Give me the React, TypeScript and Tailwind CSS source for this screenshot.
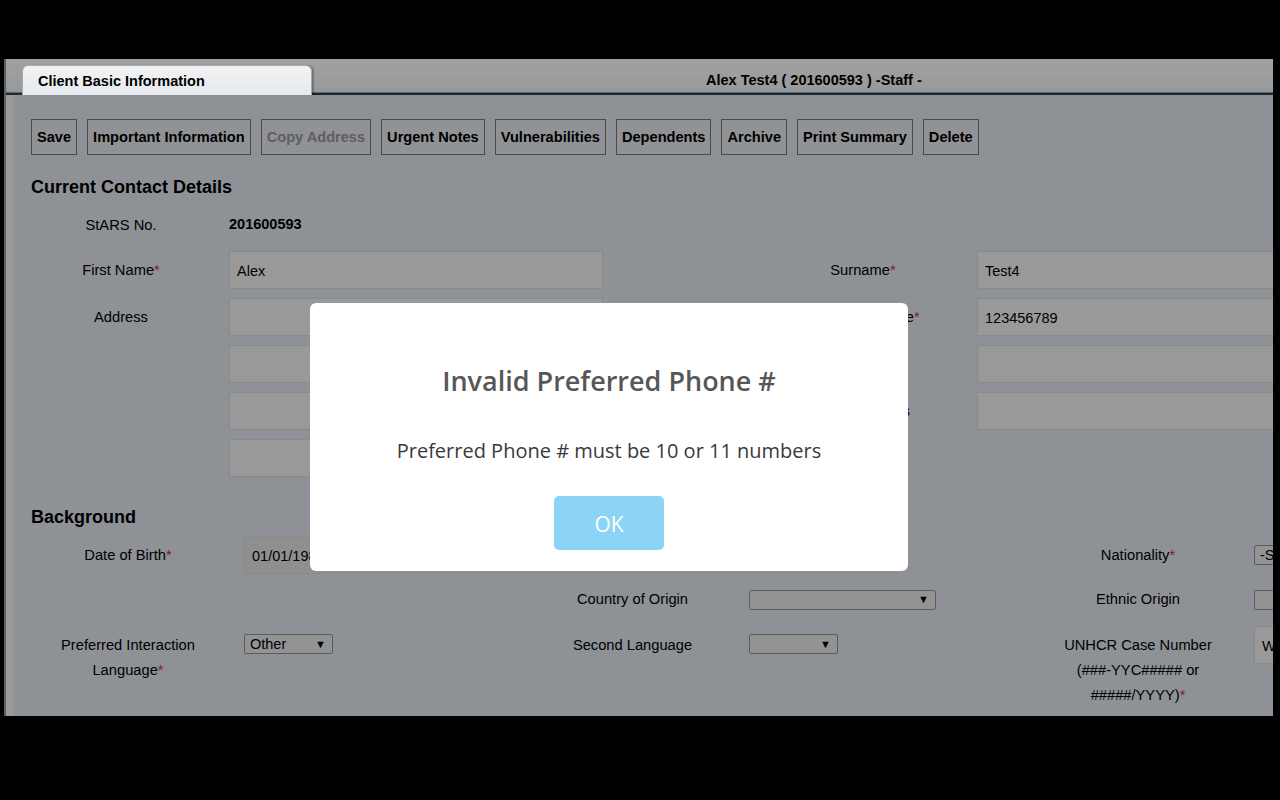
import React from 'react'

const Req = () => <span className="text-[#dc2929]">*</span>

const Field = ({ className = '', value = '' }: { className?: string; value?: string }) => (
	<div className={`h-[38px] shrink-0 border border-[#dbdbdb] bg-[#f3f3f3] pl-[7px] pt-[3px] flex items-center text-[14.5px] text-black whitespace-nowrap overflow-hidden ${className}`}>
		{value}
	</div>
)

const Select = ({ className = '', value = '' }: { className?: string; value?: string }) => (
	<div className={`h-[20px] shrink-0 rounded-[2px] border border-[#929292] bg-[#e9e9e9] pl-[5px] pr-[6px] flex items-center justify-between text-[14.5px] text-black whitespace-nowrap overflow-hidden ${className}`}>
		<span>{value}</span>
		<span className="text-[11px] leading-none">▼</span>
	</div>
)

const buttons = [
	'Save',
	'Important Information',
	'Copy Address',
	'Urgent Notes',
	'Vulnerabilities',
	'Dependents',
	'Archive',
	'Print Summary',
	'Delete',
]

export default function App() {
	return (
		<div className="relative h-[800px] w-[1280px] overflow-hidden bg-black font-['Liberation_Sans',Arial,sans-serif] text-black">
			<div className="pt-[59px] pl-[4px]">
				<div className="h-[657px] w-[1269px] overflow-hidden border-l-2 border-[#8f969c] bg-[#e1e6ee] flex flex-col">
					{/* header bar with tab */}
					<div className="relative flex h-[36px] shrink-0 items-end border-b-2 border-[#2c3e51] bg-gradient-to-b from-[#fefefe] via-[#f8f9fa] to-[#edf1f6] shadow-[inset_0_-1px_0_#8fa3b6]">
						<div className="relative z-10 ml-[16px] -mb-[2px] flex h-[30px] w-[290px] shrink-0 items-center rounded-t-[6px] border border-b-0 border-[#a8a8a8] bg-gradient-to-b from-[#f2f3f4] to-[#e6e9ee] pl-[15px] pt-[2px] text-[14.5px] font-bold shadow-[2px_0_1px_rgba(0,0,0,0.25)]">
							Client Basic Information
						</div>
						<div className="ml-[394px] mb-[4px] whitespace-nowrap text-[14.5px] font-bold leading-[17px]">
							Alex Test4 ( 201600593 ) -Staff -
						</div>
					</div>

					{/* body */}
					<div className="flex-1 border-l-[8px] border-[#f3f3f3] pl-[17px] pt-[24px]">
						<div className="flex gap-[10px]">
							{buttons.map((b) => (
								<div
									key={b}
									className={`flex h-[36px] shrink-0 items-center border border-[#757575] bg-[#e4e7ec] px-[5px] pt-[1px] text-[14.6px] font-bold whitespace-nowrap ${b === 'Copy Address' ? 'text-[#959595]' : 'text-black'}`}
								>
									{b}
								</div>
							))}
						</div>

						<div className="mt-[21px] text-[18px] font-bold leading-[22px]">Current Contact Details</div>

						<div className="mt-[6px] flex flex-col gap-[9px] text-[14.7px]">
							<div className="flex h-[38px] items-center pt-[4px]">
								<div className="w-[198px] shrink-0 pr-[18px] text-center">StARS No.</div>
								<div className="text-[14.5px] font-bold">201600593</div>
							</div>
							<div className="flex h-[38px] items-center">
								<div className="w-[198px] shrink-0 pr-[18px] text-center">First Name<Req /></div>
								<Field className="w-[374px]" value="Alex" />
								<div className="w-[146px] shrink-0" />
								<div className="w-[228px] shrink-0 text-center">Surname<Req /></div>
								<Field className="w-[400px]" value="Test4" />
							</div>
							<div className="flex h-[38px] items-center">
								<div className="w-[198px] shrink-0 pr-[18px] text-center">Address</div>
								<Field className="w-[374px]" />
								<div className="w-[146px] shrink-0" />
								<div className="w-[228px] shrink-0 text-center">Preferred Phone<Req /></div>
								<Field className="w-[400px]" value="123456789" />
							</div>
							<div className="flex h-[38px] items-center">
								<div className="w-[198px] shrink-0" />
								<Field className="w-[374px]" />
								<div className="w-[146px] shrink-0" />
								<div className="w-[228px] shrink-0 text-center">Other Phone</div>
								<Field className="w-[400px]" />
							</div>
							<div className="flex h-[38px] items-center">
								<div className="w-[198px] shrink-0" />
								<Field className="w-[374px]" />
								<div className="w-[146px] shrink-0" />
								<div className="w-[228px] shrink-0 text-center">Email Address</div>
								<Field className="w-[400px]" />
							</div>
							<div className="flex h-[38px] items-center">
								<div className="w-[198px] shrink-0" />
								<Field className="w-[374px]" />
							</div>
						</div>

						<div className="mt-[29px] text-[18px] font-bold leading-[22px]">Background</div>

						<div className="mt-[8px] text-[14.7px] leading-[25px]">
							<div className="flex h-[38px] items-center">
								<div className="w-[213px] shrink-0 pr-[19px] text-center">Date of Birth<Req /></div>
								<Field className="w-[187px] !bg-[#e3e3e3]" value="01/01/1985" />
								<div className="w-[85px] shrink-0" />
								<div className="w-[233px] shrink-0" />
								<div className="w-[187px] shrink-0" />
								<div className="w-[112px] shrink-0" />
								<div className="w-[180px] shrink-0 text-center">Nationality<Req /></div>
								<div className="w-[26px] shrink-0" />
								<Select className="w-[120px]" value="-Select-" />
							</div>
							<div className="mt-[6px] flex h-[38px] items-center pt-[1px]">
								<div className="w-[213px] shrink-0" />
								<div className="w-[187px] shrink-0" />
								<div className="w-[85px] shrink-0" />
								<div className="w-[233px] shrink-0 text-center">Country of Origin</div>
								<Select className="w-[187px]" />
								<div className="w-[112px] shrink-0" />
								<div className="w-[180px] shrink-0 text-center">Ethnic Origin</div>
								<div className="w-[26px] shrink-0" />
								<Select className="w-[120px]" />
							</div>
							<div className="mt-[8px] flex items-start">
								<div className="mt-[6.5px] w-[213px] shrink-0 pr-[19px] text-center">
									Preferred Interaction Language<Req />
								</div>
								<Select className="mt-[8px] w-[89px]" value="Other" />
								<div className="w-[98px] shrink-0" />
								<div className="w-[85px] shrink-0" />
								<div className="mt-[6.5px] w-[233px] shrink-0 text-center">Second Language</div>
								<Select className="mt-[8px] w-[89px]" />
								<div className="w-[98px] shrink-0" />
								<div className="w-[112px] shrink-0" />
								<div className="mt-[6.5px] w-[180px] shrink-0 text-center">
									UNHCR Case Number (###-YYC##### or #####/YYYY)<Req />
								</div>
								<div className="w-[26px] shrink-0" />
								<Field className="w-[400px]" value="Waiting" />
							</div>
						</div>
					</div>
				</div>
			</div>

			{/* overlay */}
			<div className="absolute inset-0 bg-black/[0.37]" />

			{/* alert */}
			<div className="absolute left-[310px] top-[303px] h-[268px] w-[598px] rounded-[6px] bg-white pt-[61px] text-center font-['Open_Sans',sans-serif]">
				<div className="text-[27px] font-semibold leading-[34px] text-[#575757]">Invalid Preferred Phone #</div>
				<div className="mt-[39px] text-[20px] leading-[28px] text-[#3a3a3a]">
					Preferred Phone # must be 10 or 11 numbers
				</div>
				<div className="mx-auto mt-[31px] flex h-[54px] w-[110px] items-center justify-center rounded-[5px] bg-[#8cd4f5] pt-[3px] text-[21px] text-white">
					OK
				</div>
			</div>
		</div>
	)
}
